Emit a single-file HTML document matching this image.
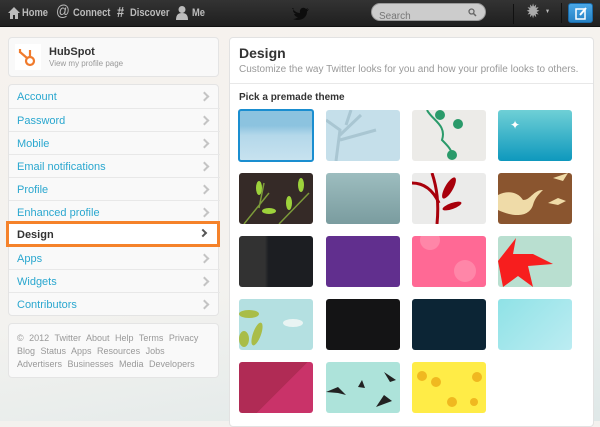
<!DOCTYPE html><html><head><style>
*{box-sizing:border-box;margin:0;padding:0}
body{width:600px;height:421px;overflow:hidden;font-family:"Liberation Sans",sans-serif;background:#f3f1ee;position:relative}
.nav{position:absolute;left:0;top:0;width:600px;height:27px;background:linear-gradient(#333,#1f1f1f);border-bottom:1px solid #111}
.nav span{position:absolute;top:7px;color:#bbb;font-size:11px;font-weight:bold;transform:scaleX(.85);transform-origin:left}
.card{position:absolute;background:#f9f9f9;border:1px solid #e4e4e4;border-radius:4px}
.row{position:absolute;left:0;width:211px;height:23px;border-top:1px solid #e8e8e8;color:#2aa7cf;font-size:11px;padding:6px 0 0 8px}
.row:after{content:"";position:absolute;right:12px;top:8px;width:5px;height:5px;border-right:2px solid #c4c4c4;border-top:2px solid #c4c4c4;transform:rotate(45deg)}
.t{position:absolute;width:74px;height:51px;border-radius:3px;overflow:hidden}
.f{color:#999;font-size:9px;line-height:13px;word-spacing:3px}
</style></head><body>
<div style="position:absolute;left:0;top:28px;width:600px;height:393px;background:linear-gradient(170deg,#f6f2ee 0%,#f3f2ef 60%,#dfe8e8 100%)"></div>
<div class="nav">
<svg style="position:absolute;left:7px;top:6px" width="14" height="14"><path d="M7 1L1 7h2v6h3V9h2v4h3V7h2z" fill="#bbb"/></svg>
<span style="left:22px">Home</span>
<span style="left:56px;top:3px;font-size:16px;font-weight:normal">@</span>
<span style="left:73px">Connect</span>
<span style="left:117px;top:4px;font-size:15px">#</span>
<span style="left:130px">Discover</span>
<svg style="position:absolute;left:175px;top:5px" width="14" height="16"><circle cx="7" cy="4.5" r="3.5" fill="#bbb"/><path d="M1 15c0-5 2-7 6-7s6 2 6 7z" fill="#bbb"/></svg>
<span style="left:192px">Me</span>
<svg style="position:absolute;left:291px;top:5px" width="18" height="16"><path d="M1 3c2 3 5 5 8 5-1-4 3-7 6-4l2-1-1 2 2-1c-1 2-2 2-2 3 0 6-7 10-14 7 2 0 4-1 5-2-2 0-3-1-4-3h2c-2-1-3-2-3-4l2 1c-2-1-2-3-1-3z" fill="#0d0d0d"/></svg>
<div style="position:absolute;left:371px;top:3px;width:115px;height:18px;border-radius:9px;background:#ccc;border:1px solid #999"><span style="position:relative;left:7px;top:2px;color:#777;font-weight:normal;font-size:10px">Search</span>
<svg style="position:absolute;right:8px;top:4px" width="9" height="9"><circle cx="3.5" cy="3.5" r="2.5" stroke="#666" fill="none" stroke-width="1.3"/><path d="M5.5 5.5L8 8" stroke="#666" stroke-width="1.5"/></svg></div>
<div style="position:absolute;left:513px;top:4px;width:1px;height:20px;background:#111"></div>
<span style="left:527px;top:2px;font-size:17px;color:#aaa">✹</span><span style="left:545px;top:9px;font-size:6px">▼</span>
<div style="position:absolute;left:561px;top:3px;width:1px;height:20px;background:#111"></div>
<div style="position:absolute;left:568px;top:3px;width:25px;height:20px;border-radius:3px;background:linear-gradient(#4aa8e8,#2581c4);border:1px solid #1a6aa8"><svg style="position:absolute;left:6px;top:3px" width="13" height="13"><rect x="1" y="2" width="9" height="10" fill="none" stroke="#fff" stroke-width="1.5"/><path d="M5 8L11 1" stroke="#fff" stroke-width="2"/></svg></div>
</div>

<div class="card" style="left:8px;top:37px;width:211px;height:40px">
<svg style="position:absolute;left:6px;top:6px" width="26" height="26"><rect width="26" height="26" fill="#fff"/><g stroke="#f07b2d" stroke-width="2.2" fill="none"><circle cx="15" cy="17" r="4"/><path d="M15 13V6M12 14L5 8M5 5v4"/></g></svg>
<div style="position:absolute;left:40px;top:8px;font-size:11px;font-weight:bold;color:#333">HubSpot</div>
<div style="position:absolute;left:40px;top:21px;font-size:8px;color:#999">View my profile page</div></div>

<div class="card" style="left:8px;top:84px;width:211px;height:232px">
<div class="row" style="top:0;border-top:none">Account</div>
<div class="row" style="top:23px">Password</div>
<div class="row" style="top:46px">Mobile</div>
<div class="row" style="top:69px">Email notifications</div>
<div class="row" style="top:92px">Profile</div>
<div class="row" style="top:115px">Enhanced profile</div>
<div class="row" style="top:161px">Apps</div>
<div class="row" style="top:184px">Widgets</div>
<div class="row" style="top:207px">Contributors</div>
</div>
<div style="position:absolute;left:6px;top:221px;width:214px;height:26px;border:3px solid #f5822a;background:#fff;color:#333;font-weight:bold;font-size:11px;padding:5px 0 0 8px">Design<span style="position:absolute;right:11px;top:6px;width:6px;height:6px;border-right:2px solid #555;border-top:2px solid #555;transform:rotate(45deg)"></span></div>

<div class="card f" style="left:8px;top:323px;width:211px;height:55px;padding:8px 8px">© 2012 Twitter About Help Terms Privacy<br>Blog Status Apps Resources Jobs<br>Advertisers Businesses Media Developers</div>

<div style="position:absolute;left:229px;top:37px;width:365px;height:390px;background:#fff;border:1px solid #e2e2e2;border-radius:4px">
<div style="position:absolute;left:9px;top:7px;font-size:14px;font-weight:bold;color:#333">Design</div>
<div style="position:absolute;left:9px;top:26px;font-size:10px;color:#999;white-space:nowrap">Customize the way Twitter looks for you and how your profile looks to others.</div>
<div style="position:absolute;left:0;top:45px;width:100%;height:1px;background:#e8e8e8"></div>
<div style="position:absolute;left:9px;top:54px;font-size:10px;font-weight:bold;color:#333">Pick a premade theme</div>
</div>

<div class="t" style="left:238px;top:109px;width:76px;height:53px;border:2px solid #1a8ed0;background:linear-gradient(#8cc3df 30%,#b4d8ea 50%,#c7e2ef)"></div>
<div class="t" style="left:326px;top:110px;background:#c5dfea"><svg width="74" height="51"><path d="M10 51L14 20L0 10M14 25L35 5M14 30L50 20M20 15L25 0" stroke="#a9c6d2" stroke-width="3" fill="none"/></svg></div>
<div class="t" style="left:412px;top:110px;background:#ecebe8"><svg width="74" height="51"><path d="M15 0c5 10 20 15 15 30c5 5 10 10 10 15" stroke="#2a9a6a" stroke-width="2" fill="none"/><circle cx="28" cy="5" r="5" fill="#2a9a6a"/><circle cx="46" cy="14" r="5" fill="#2a9a6a"/><circle cx="40" cy="45" r="5" fill="#2a9a6a"/></svg></div>
<div class="t" style="left:498px;top:110px;background:linear-gradient(#6fd0d6,#0e98bd);color:#fff;font-size:12px"><span style="position:absolute;left:12px;top:8px">✦</span></div>

<div class="t" style="left:239px;top:173px;background:#352a27"><svg width="74" height="51"><path d="M5 51L30 20M40 51L70 20M20 35L25 10" stroke="#7c9a3a" stroke-width="1.5"/><g fill="#9dd23b"><ellipse cx="20" cy="15" rx="3" ry="7"/><ellipse cx="50" cy="30" rx="3" ry="7"/><ellipse cx="30" cy="38" rx="7" ry="3"/><ellipse cx="62" cy="12" rx="3" ry="7"/></g></svg></div>
<div class="t" style="left:326px;top:173px;background:linear-gradient(#9dbdbf,#7a9c9f)"></div>
<div class="t" style="left:412px;top:173px;background:#ebebea"><svg width="74" height="51"><path d="M25 51C27 30 25 15 20 0M27 30C20 15 10 10 0 10" stroke="#a8000b" stroke-width="3" fill="none"/><ellipse cx="37" cy="15" rx="4" ry="12" fill="#a8000b" transform="rotate(30 37 15)"/><ellipse cx="40" cy="33" rx="10" ry="3" fill="#a8000b" transform="rotate(-20 40 33)"/></svg></div>
<div class="t" style="left:498px;top:173px;background:#8a552f"><svg width="74" height="51"><path d="M0 22c10-5 20-3 25 5c8 0 10-10 20-10c-5 5-8 8-10 15c-5 15-25 10-35 5z" fill="#efdba8"/><path d="M50 30l10-5 8 3-8 4z M55 5l15-5-5 8z" fill="#efdba8"/></svg></div>

<div class="t" style="left:239px;top:236px;background:linear-gradient(90deg,#323232 35%,#1c1e22 40%)"></div>
<div class="t" style="left:326px;top:236px;background:#612f8e"></div>
<div class="t" style="left:412px;top:236px;background:#ff6995"><div style="position:absolute;left:8px;top:-6px;width:20px;height:20px;border-radius:50%;background:#ff86a8"></div><div style="position:absolute;left:42px;top:24px;width:22px;height:22px;border-radius:50%;background:#ff86a8"></div></div>
<div class="t" style="left:498px;top:236px;background:#b9dfd0"><svg width="74" height="51"><path d="M0 25L18 2L15 18L35 18L55 28L30 30L35 51L20 40L5 51z" fill="#f71e1e"/></svg></div>

<div class="t" style="left:239px;top:299px;background:#b4e0e1"><svg width="74" height="51"><g fill="#a9bd48"><ellipse cx="10" cy="15" rx="10" ry="4"/><ellipse cx="18" cy="35" rx="4" ry="12" transform="rotate(20 18 35)"/><ellipse cx="5" cy="40" rx="5" ry="8"/></g><ellipse cx="54" cy="24" rx="10" ry="4" fill="#e9f4f3"/></svg></div>
<div class="t" style="left:326px;top:299px;background:#141415"></div>
<div class="t" style="left:412px;top:299px;background:#0c2535"></div>
<div class="t" style="left:498px;top:299px;background:linear-gradient(135deg,#8fe2e6,#bcecf2)"></div>

<div class="t" style="left:239px;top:362px;background:linear-gradient(135deg,#b02b55 55%,#c93369 55%)"></div>
<div class="t" style="left:326px;top:362px;background:#ade3da"><svg width="74" height="51"><g fill="#222"><path d="M0 30l12-5 8 8-8-2z"/><path d="M32 25l4-7 3 8z"/><path d="M58 10l12 8-6 2z"/><path d="M50 45l8-12 8 6z"/></g></svg></div>
<div class="t" style="left:412px;top:362px;background:#ffec47"><svg width="74" height="51"><g fill="#f0b820"><circle cx="10" cy="14" r="5"/><circle cx="24" cy="20" r="5"/><circle cx="40" cy="40" r="5"/><circle cx="65" cy="15" r="5"/><circle cx="62" cy="40" r="4"/></g></svg></div>
</body></html>
